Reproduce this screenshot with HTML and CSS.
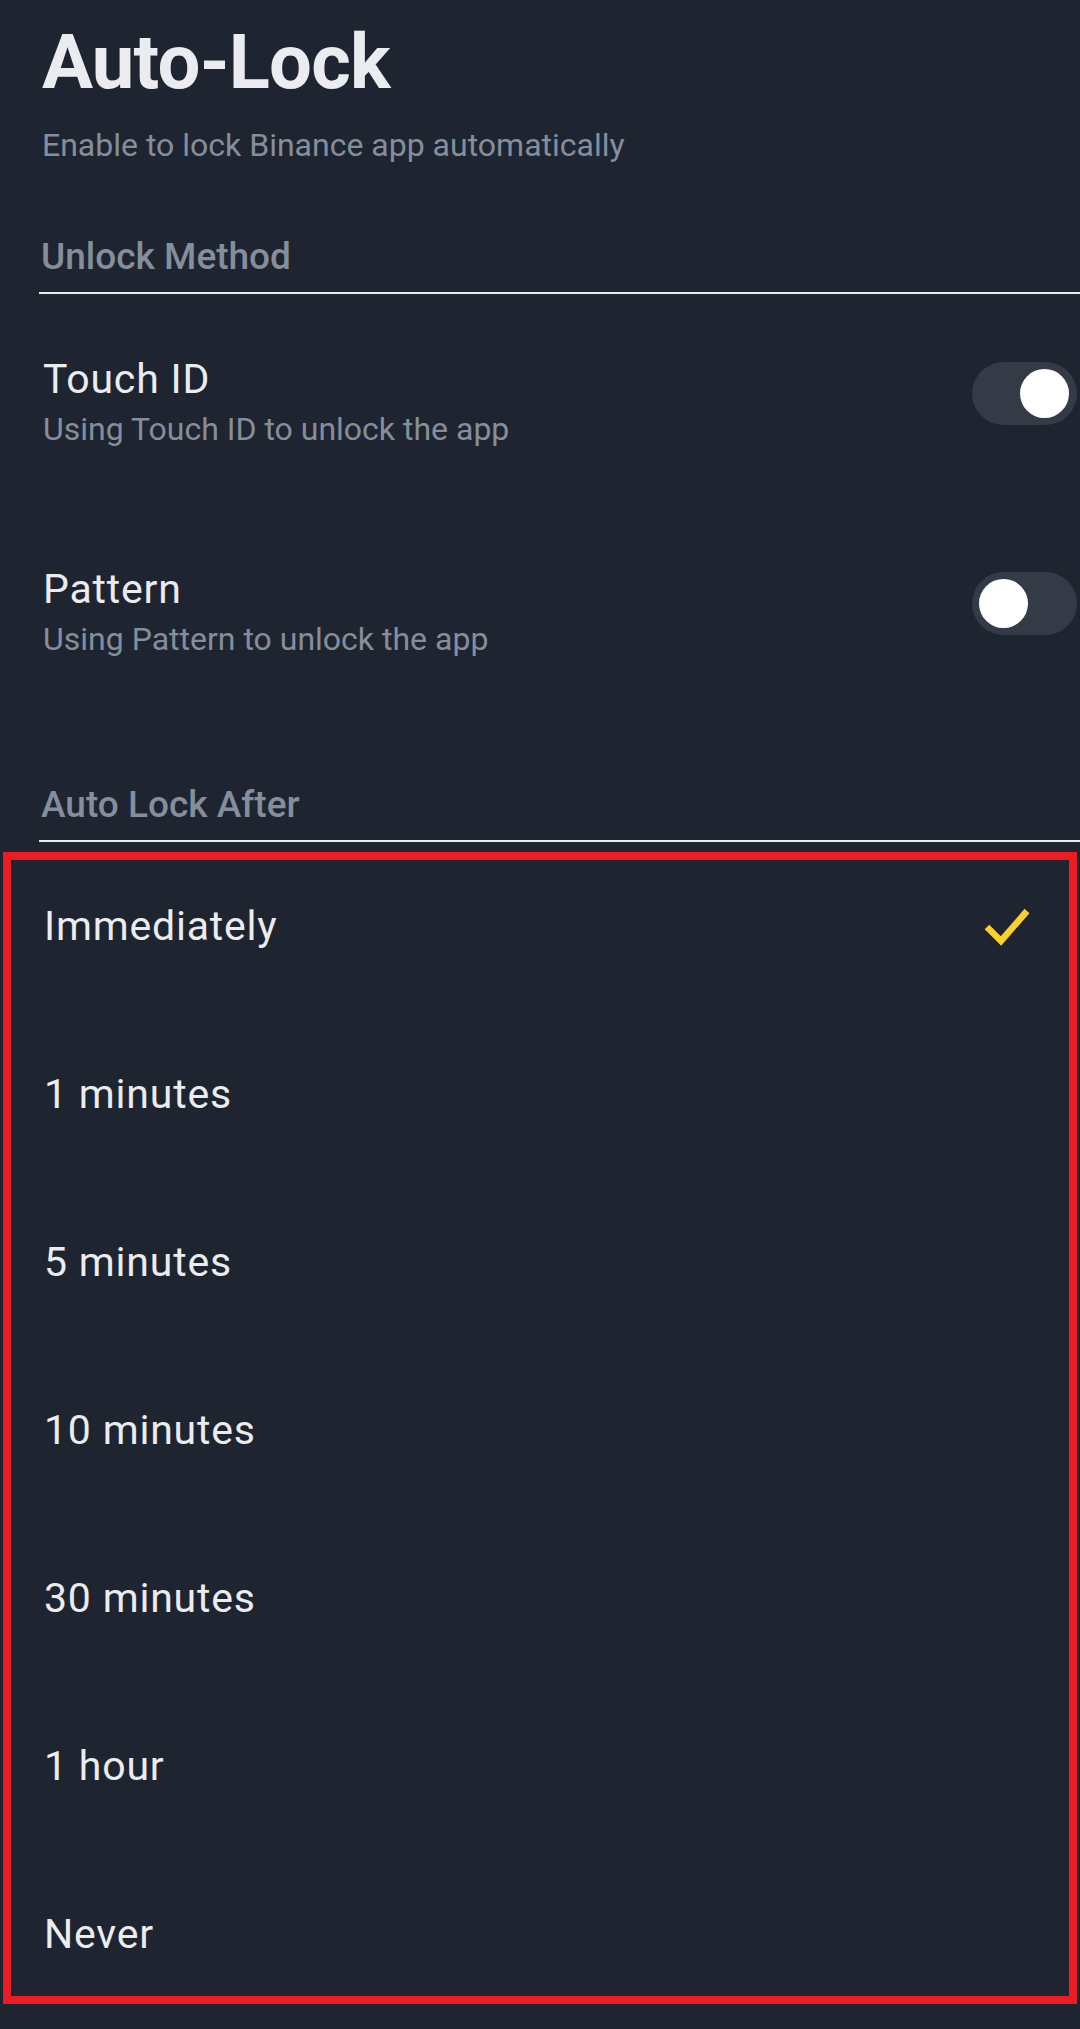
FILE: index.html
```html
<!DOCTYPE html>
<html lang="en">
<head>
<meta charset="utf-8">
<title>Auto-Lock</title>
<link rel="stylesheet" href="styles.css">
</head>
<body>
<div class="page">
  <header class="head">
    <h1 class="title">Auto-Lock</h1>
    <p class="subtitle">Enable to lock Binance app automatically</p>
  </header>

  <div class="section-head first">Unlock Method</div>

  <div class="setting first-row">
    <div class="setting-text">
      <div class="setting-name">Touch ID</div>
      <div class="setting-desc">Using Touch ID to unlock the app</div>
    </div>
    <div class="toggle on"><span class="knob"></span></div>
  </div>

  <div class="setting second-row">
    <div class="setting-text">
      <div class="setting-name">Pattern</div>
      <div class="setting-desc">Using Pattern to unlock the app</div>
    </div>
    <div class="toggle"><span class="knob"></span></div>
  </div>

  <div class="section-head second">Auto Lock After</div>

  <ul class="options">
    <li class="option selected">
      <span class="option-label">Immediately</span>
      <svg class="check" width="52" height="48" viewBox="0 0 52 48" aria-hidden="true">
        <path d="M7 25 L21 39 L47 9" fill="none" stroke="#f8d12f" stroke-width="6.5" stroke-linejoin="miter"/>
      </svg>
    </li>
    <li class="option"><span class="option-label">1 minutes</span></li>
    <li class="option"><span class="option-label">5 minutes</span></li>
    <li class="option"><span class="option-label">10 minutes</span></li>
    <li class="option"><span class="option-label">30 minutes</span></li>
    <li class="option"><span class="option-label">1 hour</span></li>
    <li class="option"><span class="option-label">Never</span></li>
  </ul>
</div>
</body>
</html>
```

FILE: styles.css
```css
html, body {
  margin: 0;
  padding: 0;
  background: #1f2530;
}

body {
  font-family: Roboto, "Noto Sans", "Liberation Sans", sans-serif;
  color: #eaecef;
}

.page {
  width: 1080px;
  height: 2029px;
  overflow: hidden;
  padding-right: 3px;
  box-sizing: border-box;
}

.head {
  padding: 17px 0 0 42px;
}

.title {
  margin: 0;
  font-size: 76px;
  line-height: 90px;
  font-weight: 700;
  letter-spacing: -0.8px;
  color: #eaecef;
}

.subtitle {
  margin: 18px 0 0;
  font-size: 32px;
  line-height: 40px;
  color: #848e9c;
}

.section-head {
  margin-left: 39px;
  margin-right: -3px;
  padding: 0 0 13px 2px;
  font-size: 37px;
  line-height: 44px;
  font-weight: 500;
  color: #848e9c;
  border-bottom: 2px solid #eaecef;
}

.section-head.first {
  margin-top: 70px;
}

.section-head.second {
  margin-top: 124px;
}

.setting {
  display: flex;
  justify-content: space-between;
  align-items: flex-start;
  padding-left: 43px;
}

.setting.first-row {
  margin-top: 61px;
}

.setting.second-row {
  margin-top: 116px;
}

.setting-name {
  font-size: 41px;
  line-height: 48px;
  letter-spacing: 0.8px;
  color: #eaecef;
}

.setting-desc {
  margin-top: 6px;
  font-size: 32px;
  line-height: 40px;
  color: #848e9c;
}

.toggle {
  position: relative;
  margin-top: 7px;
  width: 105px;
  height: 63px;
  border-radius: 32px;
  background: #343b47;
}

.knob {
  position: absolute;
  top: 7px;
  left: 7px;
  width: 49px;
  height: 49px;
  border-radius: 50%;
  background: #ffffff;
}

.toggle.on .knob {
  left: auto;
  right: 8px;
}

.options {
  list-style: none;
  margin: 10px 0 0 3px;
  padding: 42px 0 38px;
  border: 8px solid #ed1c24;
  display: flex;
  flex-direction: column;
  gap: 120px;
}

.option {
  display: flex;
  justify-content: space-between;
  align-items: center;
  height: 48px;
  padding: 0 37px 0 33px;
}

.option-label {
  font-size: 41px;
  line-height: 48px;
  letter-spacing: 0.8px;
  color: #eaecef;
}

.check {
  display: block;
}
```
